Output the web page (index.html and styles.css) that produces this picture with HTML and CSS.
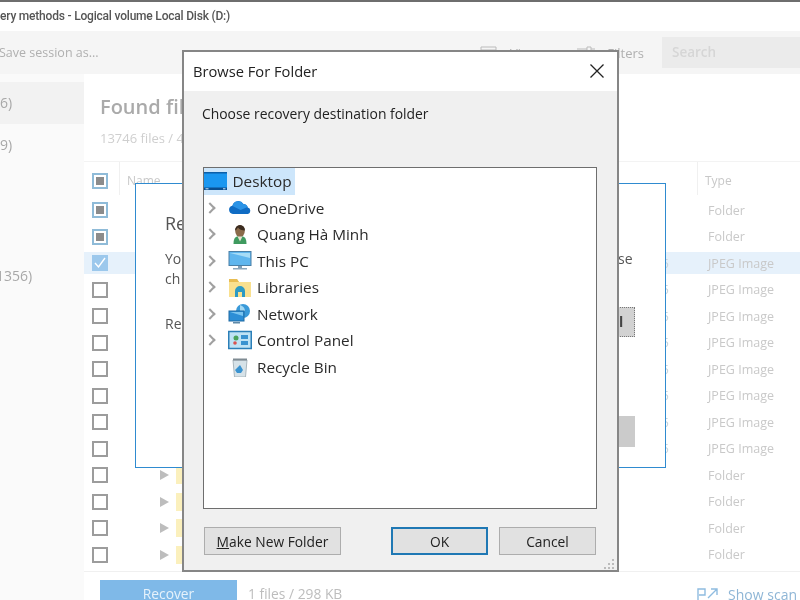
FILE: index.html
```html
<!DOCTYPE html>
<html lang="en">
<head>
<meta charset="utf-8">
<title>Browse For Folder</title>
<link rel="stylesheet" href="styles.css">
</head>
<body>
<div class="app">
  <div class="titlebar">ery methods - Logical volume Local Disk (D:)</div>
  <div class="toolbar">
    <span class="save">Save session as...</span>
    <div class="tools">
      <span class="tool view"><svg class="tool-icon" width="18" height="14" viewBox="0 0 18 14"><path d="M1 1h15v11H1zM1 4h15" fill="none" stroke="#bbb"/></svg>View</span>
      <span class="tool filters"><svg class="tool-icon" width="18" height="14" viewBox="0 0 18 14"><path d="M0 3h10M14 3h4M0 9h4M8 9h10M10 1h4v4h-4zM4 7h4v4H4z" fill="none" stroke="#bbb"/></svg>Filters</span>
      <span class="search">Search</span>
    </div>
  </div>
  <div class="content">
    <aside class="sidebar">
      <div class="side-item active">6)</div>
      <div class="side-item">9)</div>
      <div class="side-item far">1356)</div>
    </aside>
    <main class="main">
      <h1 class="found">Found files</h1>
      <div class="count">13746 files / 44 GB</div>
      <div class="thead">
        <span class="check mixed"></span>
        <span class="col-name">Name</span>
        <span class="col-type">Type</span>
      </div>
      <div class="rows">
        <div class="row"><span class="check mixed"></span><span class="type">Folder</span></div>
        <div class="row"><span class="check mixed"></span><span class="type">Folder</span></div>
        <div class="row selected"><span class="check on"><svg width="16" height="16" viewBox="0 0 16 16"><path d="M3 8l3.500 4L13 3" fill="none" stroke="#fff" stroke-width="1.400"/></svg></span><span class="size">5</span><span class="type">JPEG Image</span></div>
        <div class="row"><span class="check"></span><span class="size">5</span><span class="type">JPEG Image</span></div>
        <div class="row"><span class="check"></span><span class="size">5</span><span class="type">JPEG Image</span></div>
        <div class="row"><span class="check"></span><span class="size">5</span><span class="type">JPEG Image</span></div>
        <div class="row"><span class="check"></span><span class="size">5</span><span class="type">JPEG Image</span></div>
        <div class="row"><span class="check"></span><span class="size">5</span><span class="type">JPEG Image</span></div>
        <div class="row"><span class="check"></span><span class="size">5</span><span class="type">JPEG Image</span></div>
        <div class="row"><span class="check"></span><span class="size">5</span><span class="type">JPEG Image</span></div>
        <div class="row"><span class="check"></span><span class="arrow"></span><span class="folder"></span><span class="type">Folder</span></div>
        <div class="row"><span class="check"></span><span class="arrow"></span><span class="folder"></span><span class="type">Folder</span></div>
        <div class="row"><span class="check"></span><span class="arrow"></span><span class="folder"></span><span class="type">Folder</span></div>
        <div class="row"><span class="check"></span><span class="arrow"></span><span class="folder"></span><span class="type">Folder</span></div>
      </div>
      <div class="footer">
        <span class="recover">Recover</span>
        <span class="summary">1 files / 298 KB</span>
        <span class="scan"><svg width="22" height="14" viewBox="0 0 22 14"><path d="M1 13V2h7v6H2M11 11l9-9M14 2h6v6" fill="none" stroke="#8fbce0" stroke-width="1.400"/></svg>Show scan</span>
      </div>
    </main>
  </div>

  <section class="recovery">
    <h2 class="rec-title">Re</h2>
    <p class="rec-text">Yo</p>
    <p class="rec-text2">ch</p>
    <p class="rec-label">Re</p>
    <span class="rec-se">se</span>
    <span class="rec-browse">l</span>
    <span class="rec-ok"></span>
  </section>

  <section class="browse">
    <header class="browse-title">
      <span>Browse For Folder</span>
      <svg class="close" width="16" height="16" viewBox="0 0 16 16"><path d="M1.500 1.500l13 13M14.500 1.500l-13 13" fill="none" stroke="#222" stroke-width="1.300"/></svg>
    </header>
    <div class="browse-body">
      <p class="prompt">Choose recovery destination folder</p>
      <div class="tree">
        <div class="node root">
          <svg class="ico" width="23" height="18" viewBox="0 0 23 18"><rect width="23" height="18" fill="#1a97f0"/><rect width="23" height="1.500" fill="#0c5fa8"/><rect y="15.500" width="23" height="2.500" fill="#0a4f90"/><path d="M1.500 16.800h3M19 16.800h2.500" stroke="#cfe8fb"/></svg>
          <span class="label">Desktop</span>
        </div>
        <div class="node">
          <span class="chev"></span>
          <svg class="ico" width="24" height="20" viewBox="0 0 24 20"><path d="M5 16a4.200 4.200 0 0 1-.6-8.300A6 6 0 0 1 15.400 6a4.700 4.700 0 0 1 4.400 3.500A3.400 3.400 0 0 1 20 16z" fill="#0f6cc4"/><path d="M4.500 8A6 6 0 0 1 15.400 6a4.700 4.700 0 0 1 4.200 3l-7 3z" fill="#2a93e6"/></svg>
          <span class="label">OneDrive</span>
        </div>
        <div class="node">
          <span class="chev"></span>
          <svg class="ico" width="24" height="20" viewBox="0 0 24 20"><path d="M5.500 20c0-6 2-8 6.500-8s6.500 2 6.500 8z" fill="#3f9a5f"/><ellipse cx="12" cy="7" rx="4.800" ry="6" fill="#8a6a4a"/><path d="M7 6.500a5 5.500 0 0 1 10 0c-3 0-6-1-7-3-1 1-2 3-3 3z" fill="#3b2c20"/><path d="M9.500 12.500l2.500 5 2.500-5z" fill="#e8e0d0"/></svg>
          <span class="label">Quang Hà Minh</span>
        </div>
        <div class="node">
          <span class="chev"></span>
          <svg class="ico" width="24" height="20" viewBox="0 0 24 20"><rect x="1" y="0.500" width="22" height="14" fill="#5fb6ee" stroke="#4a7fa6"/><path d="M2 2h20v5z" fill="#a6dcf7"/><rect x="10" y="15" width="4" height="2" fill="#7f9fb6"/><rect x="5" y="17" width="14" height="1.500" fill="#8aa6bb"/></svg>
          <span class="label">This PC</span>
        </div>
        <div class="node">
          <span class="chev"></span>
          <svg class="ico" width="24" height="20" viewBox="0 0 24 20"><path d="M1 2h8l2 3h12v15H1z" fill="#f9e08f"/><path d="M1 2h8l2 3H1z" fill="#e8bd52"/><path d="M7 20v-6a5 5 0 0 1 10 0v6h-3v-5h-4v5z" fill="#2c9ac4"/></svg>
          <span class="label">Libraries</span>
        </div>
        <div class="node">
          <span class="chev"></span>
          <svg class="ico" width="24" height="20" viewBox="0 0 24 20"><circle cx="15" cy="7" r="7" fill="#3a9ad9"/><path d="M12 1c3 1 5 3 5 6l-5 1z" fill="#a4d8f2"/><rect x="1" y="7" width="15" height="10" fill="#2c8ed6" stroke="#1f6aa3"/><path d="M2 8h13v4z" fill="#79c4f0"/><rect x="5" y="18" width="7" height="1.500" fill="#5f89a8"/></svg>
          <span class="label">Network</span>
        </div>
        <div class="node">
          <span class="chev"></span>
          <svg class="ico" width="24" height="20" viewBox="0 0 24 20"><rect x="0.750" y="1.500" width="22.500" height="17" fill="#bfe3f5" stroke="#2b7fb8" stroke-width="1.500"/><circle cx="8" cy="8" r="2.500" fill="#4aa35c"/><circle cx="7" cy="13" r="1.800" fill="#d9534f"/><rect x="13" y="5" width="7" height="4" fill="#3a93d0"/><rect x="13" y="11" width="7" height="4" fill="#3a93d0"/></svg>
          <span class="label">Control Panel</span>
        </div>
        <div class="node">
          <span class="chev none"></span>
          <svg class="ico" width="24" height="20" viewBox="0 0 24 20"><path d="M5 3h14l-1.500 17h-11z" fill="#d6e2e8" stroke="#a9b6bd"/><path d="M5 2.500h14" stroke="#7f8b92" stroke-width="2"/><path d="M12 8l3 5-2 3H9l-2-3z" fill="#3a93d0"/></svg>
          <span class="label">Recycle Bin</span>
        </div>
      </div>
      <div class="actions">
        <button class="btn new"><u>M</u>ake New Folder</button>
        <button class="btn ok">OK</button>
        <button class="btn cancel">Cancel</button>
      </div>
      <svg class="grip" width="12" height="12" viewBox="0 0 12 12"><path d="M9 1h2v2H9zM5 5h2v2H5zM9 5h2v2H9zM1 9h2v2H1zM5 9h2v2H5zM9 9h2v2H9z" fill="#bbb"/></svg>
    </div>
  </section>
</div>
</body>
</html>
```
FILE: styles.css
```css
* { box-sizing: border-box; }
html, body { margin: 0; padding: 0; background: #fff; }
body { font-family: "Open Sans", "Noto Sans", "Liberation Sans", sans-serif; }

.app {
  position: relative;
  width: 800px;
  height: 600px;
  overflow: hidden;
  display: flex;
  flex-direction: column;
  background: #fff;
  filter: blur(0.4px);
}

.titlebar {
  height: 31px;
  flex: none;
  border-top: 2px solid #6e6e6e;
  padding-top: 3px;
  font-family: Roboto, "Open Sans", sans-serif;
  font-size: 12px;
  letter-spacing: -0.2px;
  font-weight: 500;
  color: #555;
  white-space: nowrap;
  line-height: 22px;
}

.toolbar {
  height: 43px;
  flex: none;
  background: #f5f5f5;
  display: flex;
  align-items: center;
  justify-content: space-between;
}
.save { margin-left: -1px; font-size: 12.500px; color: #b0b0b0; }
.tools { display: flex; align-items: center; height: 100%; }
.tool { display: flex; align-items: center; font-size: 13px; color: #b0b0b0; }
.tool-icon { margin-right: 12px; }
.view { margin-right: 39px; }
.filters { margin-right: 18px; }
.search {
  width: 138px;
  height: 31px;
  background: #ebebeb;
  color: #d6d6d6;
  font-size: 13.500px;
  font-weight: 600;
  line-height: 31px;
  padding-left: 10px;
}

.content { flex: 1; display: flex; min-height: 0; }

.sidebar {
  width: 84px;
  flex: none;
  background: #fafafa;
  padding-top: 8px;
  font-size: 14px;
  color: #a8a8a8;
}
.side-item { height: 42px; line-height: 42px; }
.side-item.active { background: #f2f2f2; }
.side-item.far { margin-top: 89px; margin-left: -4px; }

.main { flex: 1; display: flex; flex-direction: column; min-width: 0; }

.found {
  margin: 20px 0 0 16px;
  font-size: 20px;
  line-height: 26px;
  font-weight: 600;
  color: #aaa;
}
.count {
  margin: 9px 0 0 16px;
  font-size: 13px;
  line-height: 18px;
  color: #cfcfcf;
}
.thead {
  margin-top: 14px;
  height: 36px;
  flex: none;
  border-top: 1px solid #f3f3f3;
  display: flex;
  align-items: flex-start;
  padding-left: 8px;
  font-size: 12px;
  color: #c8c8c8;
}
.thead .check { margin-top: 11px; }
.col-name, .col-type {
  height: 33px;
  padding: 10px 0 0 7px;
  line-height: 18px;
  border-left: 1px solid #f0f0f0;
}
.col-name { margin-left: 11px; }
.col-type { margin-left: auto; width: 103px; }

.rows { display: flex; flex-direction: column; gap: 4.500px; padding-top: 2px; flex: 1; min-height: 0; }
.row {
  height: 22px;
  flex: none;
  display: flex;
  align-items: center;
  padding-left: 8px;
  font-size: 12.500px;
  color: #c9c9c9;
}
.row.selected { background: #e6f1fb; }
.type { margin-left: auto; width: 92px; }
.size { margin-left: auto; color: #c9d3da; }
.size + .type { margin-left: 39px; }
.arrow {
  margin-left: 52px;
  width: 0;
  height: 0;
  border-left: 9px solid #bdbdbd;
  border-top: 5.500px solid transparent;
  border-bottom: 5.500px solid transparent;
}
.folder { margin-left: 7px; width: 10px; height: 18px; background: #fbf0bd; }

.check {
  width: 16px;
  height: 16px;
  flex: none;
  border: 2px solid #9c9c9c;
  background: #fff;
  display: flex;
  align-items: center;
  justify-content: center;
}
.check.mixed { border-color: #8fbbd8; }
.check.mixed::after { content: ""; width: 8px; height: 8px; background: #8c8c8c; }
.check.on { border: none; background: #9cc8ec; }

.footer {
  height: 29px;
  flex: none;
  border-top: 1px solid #f0f0f0;
  display: flex;
  align-items: flex-start;
  padding: 8px 0 0 16px;
  font-size: 13.800px;
  color: #bdbdbd;
  white-space: nowrap;
}
.recover {
  width: 137px;
  height: 28px;
  background: #7fb9e8;
  color: #e6f2fb;
  text-align: center;
  line-height: 28px;
}
.summary { margin-left: 11px; line-height: 28px; }
.scan { margin-left: auto; display: flex; align-items: center; height: 28px; color: #8fb6d6; font-size: 14px; margin-right: 3px; }
.scan svg { margin-right: 9px; }

.recovery {
  position: absolute;
  left: 135px;
  top: 183px;
  width: 531px;
  height: 285px;
  background: #fff;
  border: 1px solid #2f8bd0;
  color: #555;
}
.rec-title { position: absolute; left: 29px; top: 27px; margin: 0; font-size: 18px; font-weight: 400; color: #555; }
.rec-text { position: absolute; left: 29px; top: 65px; margin: 0; font-size: 14px; }
.rec-text2 { position: absolute; left: 29px; top: 85px; margin: 0; font-size: 14px; }
.rec-label { position: absolute; left: 29px; top: 130px; margin: 0; font-size: 14px; }
.rec-se { position: absolute; left: 482px; top: 65px; font-size: 14px; }
.rec-browse {
  position: absolute;
  left: 482px;
  top: 123px;
  width: 17px;
  height: 30px;
  background: #d2d2d2;
  border: 1px dotted #777;
  font-size: 14px;
  line-height: 28px;
  color: #444;
  font-weight: 700;
}
.rec-ok { position: absolute; left: 482px; top: 232px; width: 17px; height: 31px; background: #cbcbcb; }

.browse {
  position: absolute;
  left: 182px;
  top: 50px;
  width: 437px;
  height: 522px;
  border: 2px solid #868686;
  background: #f0f0f0;
  display: flex;
  flex-direction: column;
  color: #222;
}
.browse-title {
  height: 39px;
  flex: none;
  background: #fff;
  display: flex;
  align-items: center;
  justify-content: space-between;
  padding: 0 12px 2px 9px;
  font-size: 14.700px;
}
.close { display: block; }
.browse-body { flex: 1; display: flex; flex-direction: column; position: relative; padding: 0 20px 0 19px; }
.prompt { margin: 13px 0 0 -1px; font-size: 13.900px; line-height: 20px; flex: none; }
.tree {
  margin-top: 43px;
  height: 342px;
  flex: none;
  background: #fff;
  border: 1.500px solid #6e6e6e;
  font-size: 15.300px;
}
.node { height: 26.500px; display: flex; align-items: center; color: #2a2a2a; }
.node.root { width: 91px; background: #cde6fb; }
.node.root .ico { margin-left: 0; }
.node.root .label { margin-left: 5.500px; }
.chev {
  width: 8px;
  height: 8px;
  flex: none;
  margin-left: 1.500px;
  border-top: 2px solid #a0a0a0;
  border-right: 2px solid #a0a0a0;
  transform: rotate(45deg);
}
.chev.none { visibility: hidden; }
.ico { flex: none; margin-left: 14px; }
.label { margin-left: 5.500px; white-space: nowrap; }

.actions { margin-top: 18px; display: flex; flex: none; padding-left: 1px; }
.btn {
  height: 28px;
  padding: 0;
  background: #e1e1e1;
  border: 1px solid #adadad;
  border-radius: 0;
  font: inherit;
  font-size: 13.800px;
  color: #222;
}
.btn.new { width: 137px; }
.btn.ok { width: 97px; margin-left: 50px; border: 2px solid #1f78b4; }
.btn.cancel { width: 97px; margin-left: 11px; }
.grip { position: absolute; right: 2px; bottom: 0; }
```
